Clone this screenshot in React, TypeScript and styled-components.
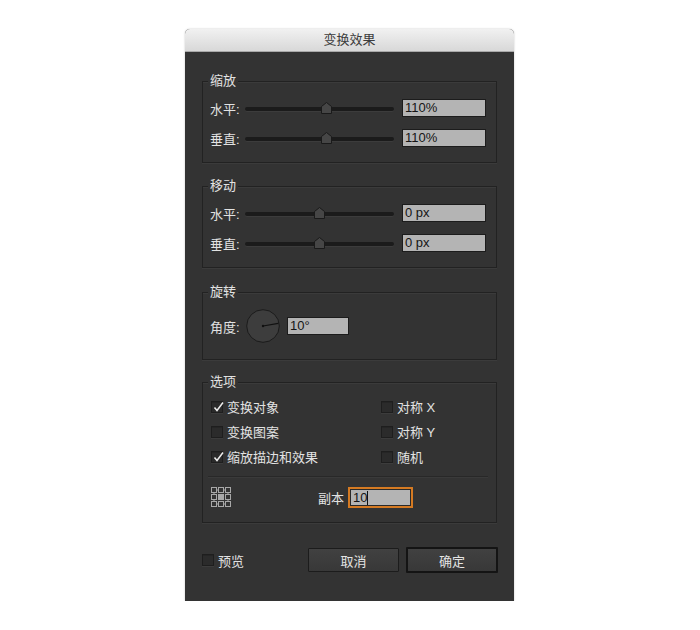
import styled, { createGlobalStyle } from 'styled-components'

const GlobalStyle = createGlobalStyle`
  body {
    margin: 0;
    background: #ffffff;
    font-family: 'Liberation Sans', 'Noto Sans CJK SC', sans-serif;
  }
`

const Page = styled.div`
  padding: 29px 0 0 185px;
`

const Dialog = styled.div`
  width: 329px;
  height: 572px;
  background: #333333;
  border-radius: 5px 5px 0 0;
  box-shadow: 0 0 2px rgba(0, 0, 0, 0.25);
  display: flex;
  flex-direction: column;
  box-sizing: border-box;
`

const TitleBar = styled.div`
  height: 22px;
  border-bottom: 1px solid #a9a9a9;
  border-radius: 5px 5px 0 0;
  background: linear-gradient(#f1f1f1, #d8d8d8);
  color: #3c3c3c;
  font-size: 13px;
  line-height: 22px;
  text-align: center;
`

const Body = styled.div`
  padding: 29px 17px 0;
  display: flex;
  flex-direction: column;
`

const Group = styled.div<{ $height: number; $top: number }>`
  height: ${(p) => p.$height}px;
  margin-top: ${(p) => p.$top}px;
  box-sizing: border-box;
  border: 1px solid #222222;
  box-shadow: 0 1px 0 #3b3b3b, inset 0 1px 0 #3b3b3b;
  display: flex;
  flex-direction: column;
`

const Legend = styled.span`
  align-self: flex-start;
  margin: -8px 0 0 5px;
  padding: 0 2px;
  background: #333333;
  color: #e2e2e2;
  font-size: 13px;
  line-height: 14px;
`

const SliderRows = styled.div`
  margin-top: 11px;
  display: flex;
  flex-direction: column;
  gap: 12px;
`

const Row = styled.div`
  display: flex;
  align-items: center;
  padding-left: 7px;
  height: 18px;
`

const Label = styled.span<{ $width?: number }>`
  width: ${(p) => (p.$width ? `${p.$width}px` : 'auto')};
  color: #e2e2e2;
  font-size: 13px;
  white-space: nowrap;
`

const Slider = styled.div`
  position: relative;
  width: 149px;
  height: 18px;
  margin-right: 8px;
`

const Groove = styled.div`
  margin-top: 8px;
  height: 4px;
  border-radius: 2px;
  background: #1b1b1b;
  box-shadow: 0 1px 0 #3c3c3c;
`

const Thumb = styled.svg`
  position: absolute;
  top: 3px;
`

const Field = styled.div<{ $width: number; $focused?: boolean }>`
  width: ${(p) => p.$width}px;
  height: ${(p) => (p.$focused ? 21 : 18)}px;
  box-sizing: border-box;
  background: #b4b4b4;
  border: ${(p) => (p.$focused ? '2px solid #d57a22' : '1px solid #1c1c1c')};
  box-shadow: ${(p) => (p.$focused ? 'inset 0 0 0 1px #2a2a2a' : 'none')};
  color: #151515;
  font-size: 13px;
  line-height: ${(p) => (p.$focused ? 17 : 16)}px;
  padding-left: ${(p) => (p.$focused ? 3 : 2)}px;
  display: flex;
  align-items: center;
`

const Caret = styled.span`
  width: 1px;
  height: 14px;
  background: #111111;
`

const DialRow = styled.div`
  margin-top: 10px;
  display: flex;
  align-items: center;
  padding-left: 7px;
  gap: 7px;
`

const OptionsGrid = styled.div`
  margin-top: 5px;
  padding-left: 8px;
  display: grid;
  grid-template-columns: 170px 1fr;
  grid-auto-rows: 25px;
`

const Option = styled.label`
  display: flex;
  align-items: center;
  gap: 4px;
  color: #e2e2e2;
  font-size: 13px;
`

const Box = styled.span`
  position: relative;
  width: 12px;
  height: 12px;
  box-sizing: border-box;
  background: #2b2b2b;
  border: 1px solid #1e1e1e;
  box-shadow: inset 0 1px 0 #252525, 0 1px 0 #3c3c3c;
  flex-shrink: 0;
`

const Tick = styled.svg`
  position: absolute;
  left: 0;
  top: -2px;
`

const Separator = styled.div`
  margin: 7px 8px 0 5px;
  height: 1px;
  background: #282828;
  box-shadow: 0 1px 0 #3a3a3a;
`

const CopiesRow = styled.div`
  margin-top: 10px;
  padding-left: 8px;
  display: flex;
  align-items: center;
`

const CopiesLabel = styled(Label)`
  margin-left: 86px;
  margin-right: 4px;
`

const Footer = styled.div`
  margin: 24px -1px 0 0;
  display: flex;
  align-items: center;
`

const Buttons = styled.div`
  margin-left: auto;
  display: flex;
  align-items: center;
  gap: 7px;
`

const Button = styled.button<{ $primary?: boolean }>`
  width: ${(p) => (p.$primary ? 92 : 91)}px;
  height: ${(p) => (p.$primary ? 26 : 24)}px;
  box-sizing: border-box;
  background: linear-gradient(#414141, #383838);
  border: ${(p) => (p.$primary ? '2px solid #141414' : '1px solid #1c1c1c')};
  border-radius: 1px;
  color: #e4e4e4;
  font-family: inherit;
  font-size: 13px;
  padding: 0;
`

function Checkbox({ checked }: { checked?: boolean }) {
  return (
    <Box>
      {checked && (
        <Tick width="13" height="13" viewBox="0 0 13 13">
          <path d="M2.5 7.5 L5 10.5 L11 2.5" fill="none" stroke="#ececec" strokeWidth="1.5" />
        </Tick>
      )}
    </Box>
  )
}

function SliderControl({ value }: { value: number }) {
  return (
    <Slider>
      <Groove />
      <Thumb width="11" height="12" viewBox="0 0 11 12" style={{ left: `${value * 149 - 5.5}px` }}>
        <path d="M0.5 4.5 L5.5 0.5 L10.5 4.5 V11.5 H0.5 Z" fill="#464646" stroke="#1a1a1a" />
      </Thumb>
    </Slider>
  )
}

function Dial({ angle }: { angle: number }) {
  const r = (angle * Math.PI) / 180
  return (
    <svg width="34" height="34" viewBox="0 0 34 34">
      <circle cx="17" cy="17" r="16.3" fill="#3d3d3d" stroke="#1b1b1b" />
      <line x1="17" y1="17" x2={17 + 15.5 * Math.cos(r)} y2={17 - 15.5 * Math.sin(r)} stroke="#111" strokeWidth="1.2" />
      <circle cx="17" cy="17" r="1.2" fill="#111" />
    </svg>
  )
}

function RefPoint() {
  const pos = [0.5, 7.5, 14.5]
  return (
    <svg width="21" height="21" viewBox="0 0 21 21">
      <g stroke="#a8a8a8" fill="none">
        <line x1="5.5" y1="3" x2="7.5" y2="3" />
        <line x1="12.5" y1="3" x2="14.5" y2="3" />
        <line x1="5.5" y1="17" x2="7.5" y2="17" />
        <line x1="12.5" y1="17" x2="14.5" y2="17" />
        <line x1="3" y1="5.5" x2="3" y2="7.5" />
        <line x1="3" y1="12.5" x2="3" y2="14.5" />
        <line x1="17" y1="5.5" x2="17" y2="7.5" />
        <line x1="17" y1="12.5" x2="17" y2="14.5" />
        {pos.map((y) =>
          pos.map((x) => (
            <rect key={`${x}-${y}`} x={x} y={y} width="5" height="5" fill={x === 7.5 && y === 7.5 ? '#a8a8a8' : 'none'} />
          ))
        )}
      </g>
    </svg>
  )
}

const options = [
  { label: '变换对象', checked: true },
  { label: '对称 X' },
  { label: '变换图案' },
  { label: '对称 Y' },
  { label: '缩放描边和效果', checked: true },
  { label: '随机' },
]

export default function App() {
  return (
    <Page>
      <GlobalStyle />
      <Dialog>
        <TitleBar>变换效果</TitleBar>
        <Body>
          <Group $height={82} $top={0}>
            <Legend>缩放</Legend>
            <SliderRows>
              <Row>
                <Label $width={35}>水平:</Label>
                <SliderControl value={0.55} />
                <Field $width={84}>110%</Field>
              </Row>
              <Row>
                <Label $width={35}>垂直:</Label>
                <SliderControl value={0.55} />
                <Field $width={84}>110%</Field>
              </Row>
            </SliderRows>
          </Group>

          <Group $height={82} $top={23}>
            <Legend>移动</Legend>
            <SliderRows>
              <Row>
                <Label $width={35}>水平:</Label>
                <SliderControl value={0.5} />
                <Field $width={84}>0 px</Field>
              </Row>
              <Row>
                <Label $width={35}>垂直:</Label>
                <SliderControl value={0.5} />
                <Field $width={84}>0 px</Field>
              </Row>
            </SliderRows>
          </Group>

          <Group $height={68} $top={24}>
            <Legend>旋转</Legend>
            <DialRow>
              <Label $width={29}>角度:</Label>
              <Dial angle={10} />
              <Field $width={62}>10°</Field>
            </DialRow>
          </Group>

          <Group $height={141} $top={22}>
            <Legend>选项</Legend>
            <OptionsGrid>
              {options.map((o) => (
                <Option key={o.label}>
                  <Checkbox checked={o.checked} />
                  {o.label}
                </Option>
              ))}
            </OptionsGrid>
            <Separator />
            <CopiesRow>
              <RefPoint />
              <CopiesLabel>副本</CopiesLabel>
              <Field $width={65} $focused>
                10
                <Caret />
              </Field>
            </CopiesRow>
          </Group>

          <Footer>
            <Option>
              <Checkbox />
              预览
            </Option>
            <Buttons>
              <Button>取消</Button>
              <Button $primary>确定</Button>
            </Buttons>
          </Footer>
        </Body>
      </Dialog>
    </Page>
  )
}
